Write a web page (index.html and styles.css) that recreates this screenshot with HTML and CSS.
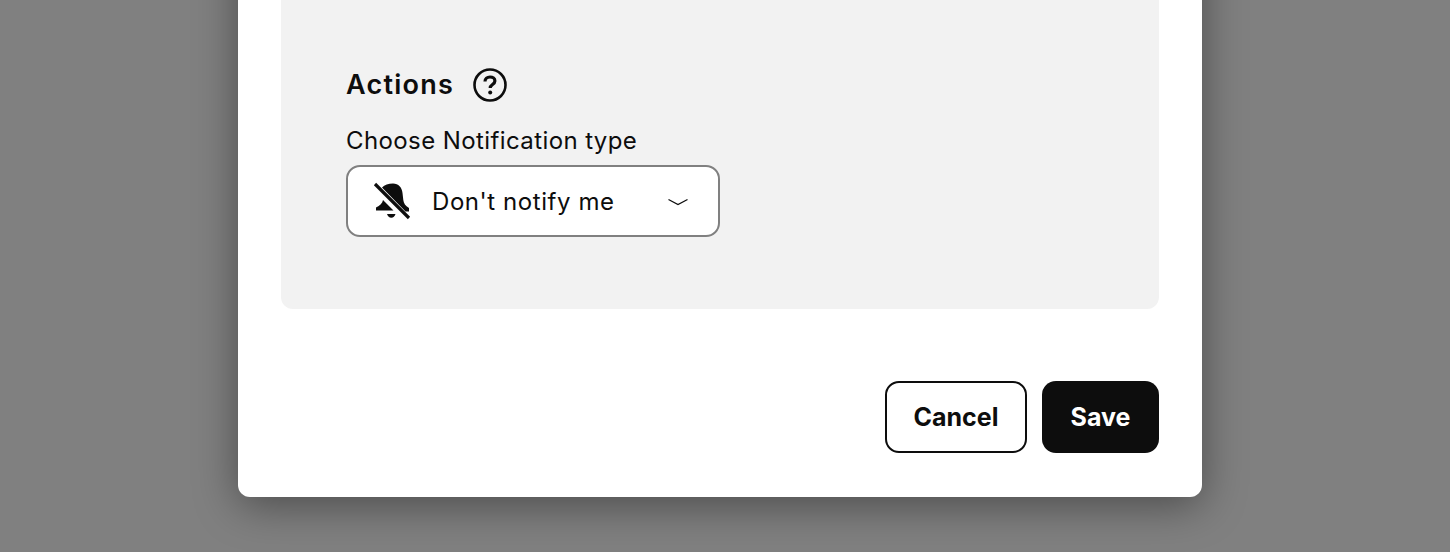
FILE: index.html
```html
<!DOCTYPE html>
<html lang="en">
<head>
    <meta charset="UTF-8">
    <title>Notification settings</title>
    <link rel="stylesheet" href="styles.css">
</head>
<body>
    <div class="modal">
        <div class="panel">
            <div class="section-title">
                <h2>Actions</h2>
                <svg class="help-icon" width="34" height="34" viewBox="0 0 34 34" fill="none">
                    <circle cx="17" cy="17" r="15.500" stroke="#0d0d0d" stroke-width="2.600"/>
                    <path d="M12 13.500c0-2.900 2.200-4.500 5-4.500s4.900 1.600 4.900 4c0 3.600-4.700 3.500-4.700 7" stroke="#0d0d0d" stroke-width="3.200"/>
                    <circle cx="17.200" cy="24.500" r="2" fill="#0d0d0d"/>
                </svg>
            </div>
            <label class="field-label">Choose Notification type</label>
            <div class="select">
                <svg class="bell-icon" width="38" height="38" viewBox="0 0 38 38">
                    <path d="M9 5.500C11.500 3 15.500 1.500 20 1.500c5.500 0 9 4 9.500 9.500l.8 7c.4 3 2 6 5.700 8v3.500h-3.500z" fill="#0d0d0d"/>
                    <path d="M10 18c-.5 3-3 6-7 7.500V28.500h17.500z" fill="#0d0d0d"/>
                    <path d="M14 32h8.500c-.6 2.400-2.300 3.800-4.200 3.800s-3.700-1.400-4.300-3.800z" fill="#0d0d0d"/>
                    <path d="M2 2 36 36" stroke="#0d0d0d" stroke-width="3.200"/>
                </svg>
                <span class="select-value">Don't notify me</span>
                <svg class="chevron" width="22" height="10" viewBox="0 0 22 10" fill="none">
                    <path d="M1.500 3.500 11 8.500 20.500 3.500" stroke="#0d0d0d" stroke-width="1.300"/>
                </svg>
            </div>
        </div>
        <div class="actions">
            <button class="btn btn-secondary">Cancel</button>
            <button class="btn btn-primary">Save</button>
        </div>
    </div>
</body>
</html>
```

FILE: styles.css
```css
html, body {
    height: 100%;
}
body {
    font-family: Inter, "Liberation Sans", sans-serif;
    background-color: #808080;
    color: #0d0d0d;
    margin: 0;
    padding: 0 10px 55px 0;
    box-sizing: border-box;
    overflow: hidden;
    display: flex;
    flex-direction: column;
    justify-content: flex-end;
    align-items: center;
}
.modal {
    flex: none;
    width: 964px;
    box-sizing: border-box;
    background-color: #fff;
    border-radius: 12px;
    padding: 60px 43px 44px;
    box-shadow: 0 8px 44px rgba(0,0,0,0.42);
}
.panel {
    background-color: #f2f2f2;
    border-radius: 12px;
    padding: 130px 65px 72px;
}
.section-title {
    display: flex;
    align-items: center;
    gap: 19px;
    height: 34px;
    margin-bottom: 23px;
}
.section-title h2 {
    margin: 0;
    padding-bottom: 2px;
    font-size: 27px;
    font-weight: 600;
    letter-spacing: 1.25px;
}
.help-icon {
    display: block;
}
.field-label {
    display: block;
    font-size: 24px;
    line-height: 32px;
    letter-spacing: 0.4px;
    margin-bottom: 8px;
}
.select {
    display: flex;
    align-items: center;
    width: 374px;
    height: 72px;
    box-sizing: border-box;
    background-color: #fff;
    border: 2px solid #808080;
    border-radius: 14px;
    padding: 0 29px 0 25px;
}
.bell-icon {
    flex: none;
    margin-right: 21px;
}
.select-value {
    flex: 1;
    font-size: 24px;
    letter-spacing: 0.57px;
}
.actions {
    display: flex;
    justify-content: flex-end;
    gap: 15px;
    margin-top: 72px;
}
.btn {
    height: 72px;
    box-sizing: border-box;
    border-radius: 14px;
    font-family: inherit;
    font-size: 25px;
    font-weight: 700;
    cursor: pointer;
}
.btn-secondary {
    width: 142px;
    background-color: #fff;
    color: #0d0d0d;
    border: 2px solid #0d0d0d;
}
.btn-primary {
    width: 117px;
    background-color: #0d0d0d;
    color: #fff;
    border: none;
}
```
